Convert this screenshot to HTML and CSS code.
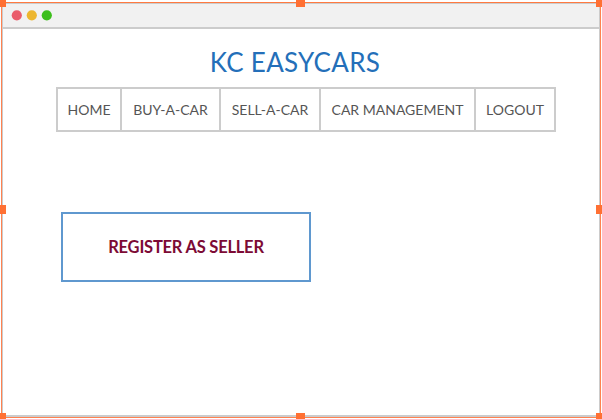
FILE: index.html
```html
<!DOCTYPE html>
<html lang="en">
<head>
<meta charset="utf-8">
<title>KC EASYCARS</title>
<link rel="stylesheet" href="styles.css">
</head>
<body>
<div class="selection">
  <div class="window">
    <header class="titlebar">
      <svg width="60" height="22" viewBox="0 0 60 22">
        <circle cx="13.8" cy="11.3" r="5.1" fill="#ea5c6b"/>
        <circle cx="28.8" cy="11.3" r="5.1" fill="#edb62f"/>
        <circle cx="43.8" cy="11.3" r="5.1" fill="#3cbe1b"/>
      </svg>
    </header>
    <main class="content">
      <h1 class="title">KC EASYCARS</h1>
      <nav class="menu">
        <a class="item">HOME</a>
        <a class="item">BUY-A-CAR</a>
        <a class="item">SELL-A-CAR</a>
        <a class="item">CAR MANAGEMENT</a>
        <a class="item">LOGOUT</a>
      </nav>
      <button class="register">REGISTER AS SELLER</button>
    </main>
  </div>
  <i class="handle top left"></i>
  <i class="handle top center"></i>
  <i class="handle top right"></i>
  <i class="handle middle left"></i>
  <i class="handle middle right"></i>
  <i class="handle bottom left"></i>
  <i class="handle bottom center"></i>
  <i class="handle bottom right"></i>
</div>
</body>
</html>
```
FILE: styles.css
```css
* { box-sizing: border-box; }

body {
  margin: 0;
  overflow: hidden;
  background: #fff;
  font-family: Lato, sans-serif;
}

.selection {
  position: relative;
  width: 602px;
  height: 419px;
  padding: 2px 1px 1px;
  overflow: hidden;
}

.window {
  display: flex;
  flex-direction: column;
  height: 416px;
  border: 1px solid #ff8250;
  border-top-color: #ff7a40;
}

.titlebar {
  height: 26px;
  border: 1px solid #ccc;
  border-bottom-width: 2px;
  background: #f1f1f1;
}

.titlebar svg { display: block; }

.content {
  flex: 1;
  border: 1px solid #ccc;
  border-width: 0 1px 2px;
  padding-left: 53px;
}

.title {
  width: 478px;
  height: 58px;
  margin: 0;
  padding-top: 16px;
  text-align: center;
  font-size: 26px;
  font-weight: 400;
  letter-spacing: 0.3px;
  line-height: 34px;
  color: #246fb9;
}

.menu {
  display: grid;
  grid-template-columns: 64px 99px 100px 155px 80px;
  width: 500px;
  height: 45px;
  border: 2px solid #ccc;
  border-right: 0;
}

.item {
  display: flex;
  align-items: center;
  justify-content: center;
  padding-bottom: 1px;
  border-right: 2px solid #ccc;
  font-size: 14px;
  color: #555;
  white-space: nowrap;
}

.register {
  display: block;
  width: 250px;
  height: 70px;
  margin: 80px 0 0 5px;
  padding: 0;
  border: 2px solid #5f98cf;
  background: #fff;
  font: 700 16.5px Lato, sans-serif;
  letter-spacing: -0.22px;
  color: #7d0b35;
}

.handle {
  position: absolute;
  width: 9px;
  height: 9px;
  background: #ff7033;
}

.top { top: -2px; }
.middle { top: 205px; }
.bottom { bottom: -3px; }
.left { left: -3px; }
.center { left: 296px; }
.right { right: -3px; }
```
